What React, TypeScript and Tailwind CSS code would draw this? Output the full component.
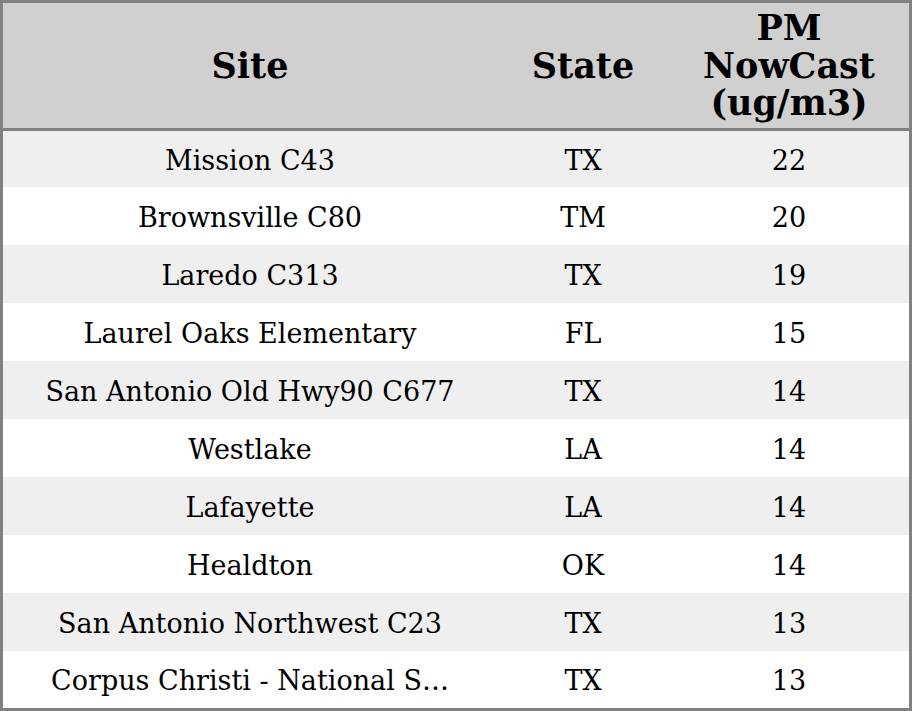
const rows = [
  { site: "Mission C43", state: "TX", pm: 22 },
  { site: "Brownsville C80", state: "TM", pm: 20 },
  { site: "Laredo C313", state: "TX", pm: 19 },
  { site: "Laurel Oaks Elementary", state: "FL", pm: 15 },
  { site: "San Antonio Old Hwy90 C677", state: "TX", pm: 14 },
  { site: "Westlake", state: "LA", pm: 14 },
  { site: "Lafayette", state: "LA", pm: 14 },
  { site: "Healdton", state: "OK", pm: 14 },
  { site: "San Antonio Northwest C23", state: "TX", pm: 13 },
  { site: "Corpus Christi - National S\u2026", state: "TX", pm: 13 },
]

export default function App() {
  return (
    <div className="w-[912px] h-[711px] bg-white font-['DejaVu_Serif',serif] text-black">
      <div className="border-[3px] border-[#808080]">
        <div className="grid grid-cols-[494px_172px_240px] h-[128px] bg-[#d0d0d0] border-b-[3px] border-[#808080] text-[35px] leading-[37.5px] font-bold text-center">
          <div className="flex items-center justify-center">Site</div>
          <div className="flex items-center justify-center">State</div>
          <div className="flex items-center justify-center">
            PM
            <br />
            NowCast
            <br />
            (ug/m3)
          </div>
        </div>
        {rows.map((r, i) => (
          <div
            key={i}
            className={
              "grid grid-cols-[494px_172px_240px] pt-[4px] text-[27px] text-center items-center " +
              (i % 2 === 0 ? "bg-[#efefef] " : "bg-white ") +
              (i === 0 ? "h-[56px]" : i === rows.length - 1 ? "h-[57px]" : "h-[58px]")
            }
          >
            <div className="whitespace-nowrap">{r.site}</div>
            <div>{r.state}</div>
            <div>{r.pm}</div>
          </div>
        ))}
      </div>
    </div>
  )
}
